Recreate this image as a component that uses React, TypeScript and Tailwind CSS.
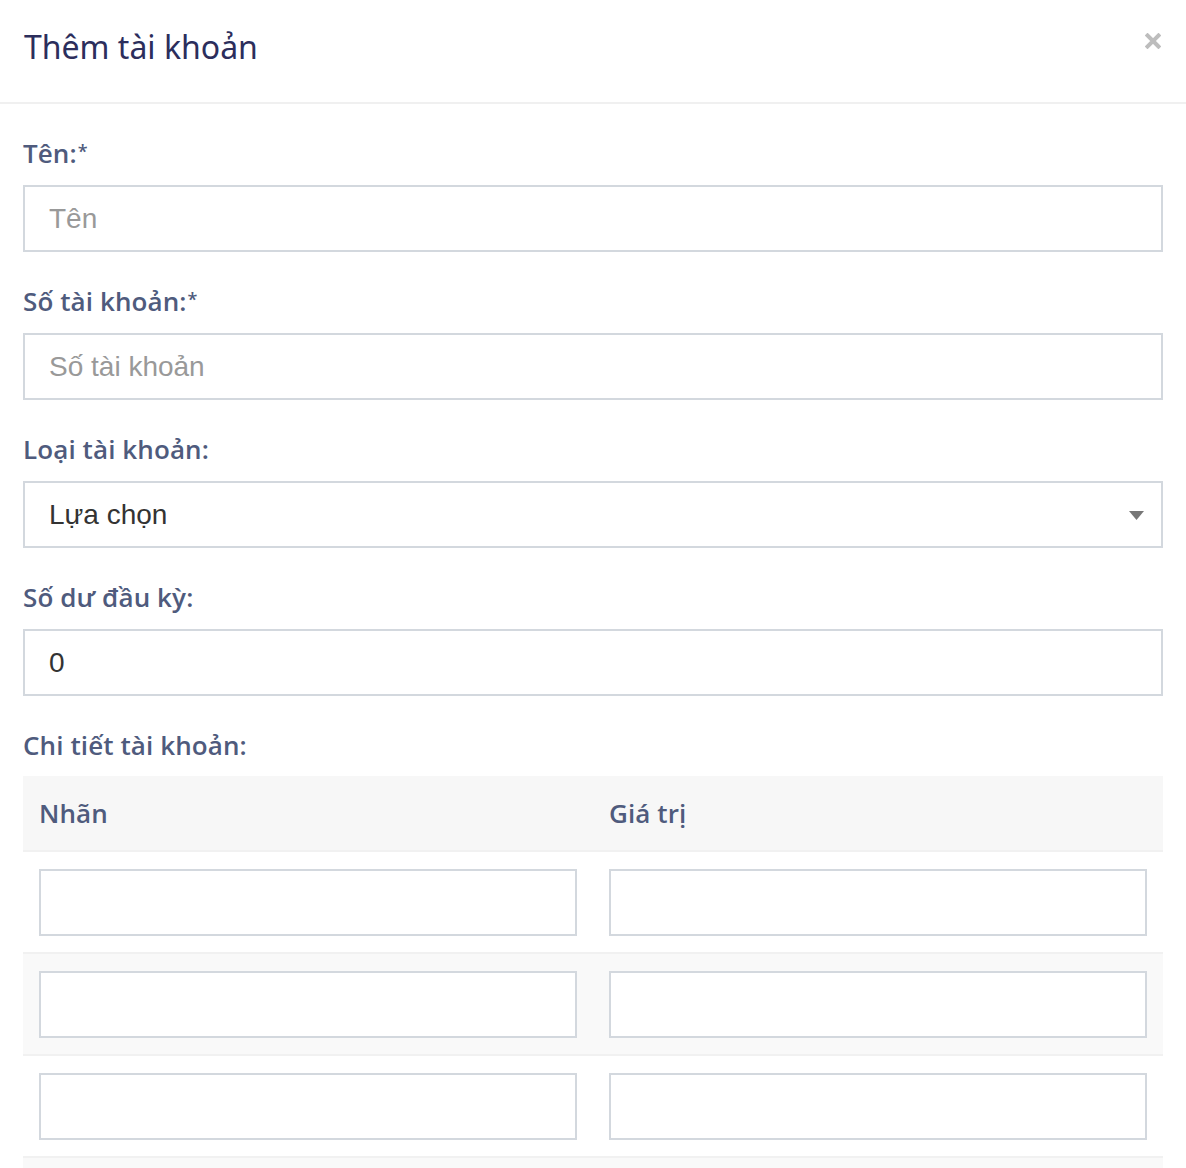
import React from "react";

const labelCls =
  "block text-[26px] leading-[30px] font-semibold text-[#4f5b7d] tracking-[0.1px] [font-family:'Open_Sans',Lato,sans-serif]";
const inputCls =
  "block w-full h-[67px] border-2 border-[#d3d8de] bg-white px-[24px] text-[28px] text-[#333] placeholder:text-[#999] outline-none [font-family:'Liberation_Sans',Arial,sans-serif]";

function Field({ label, children }: { label: React.ReactNode; children: React.ReactNode }) {
  return (
    <div className="flex flex-col gap-[17px]">
      <label className={labelCls}>{label}</label>
      {children}
    </div>
  );
}

const Star = () => <span className="text-[18px] align-top relative top-[-2px] ml-[1px]">*</span>;

export default function App() {
  const rows = [0, 1, 2];
  return (
    <div className="w-[1186px] h-[1168px] overflow-hidden bg-white">
      <div className="flex items-start justify-between h-[104px] border-b-2 border-[#f0f0f0] px-[24px] pt-[25px]">
        <h4 className="text-[32px] leading-[44px] text-[#2c2e5c] [font-family:'Noto_Sans',sans-serif]">
          Thêm tài khoản
        </h4>
        <button className="mt-[8px] mr-[1px]" aria-label="close">
          <svg width="16" height="16" viewBox="0 0 16 16">
            <path d="M2.5 2.5 L13.5 13.5 M13.5 2.5 L2.5 13.5" stroke="#bdbdbd" strokeWidth="4" strokeLinecap="square" />
          </svg>
        </button>
      </div>
      <div className="px-[23px] pt-[34px] flex flex-col gap-[34px]">
        <Field label={<>Tên:<Star /></>}>
          <input className={inputCls} placeholder="Tên" />
        </Field>
        <Field label={<>Số tài khoản:<Star /></>}>
          <input className={inputCls} placeholder="Số tài khoản" />
        </Field>
        <Field label="Loại tài khoản:">
          <div className="relative">
            <div className={inputCls + " flex items-center"}>Lựa chọn</div>
            <svg className="absolute right-[19px] top-[30px]" width="15" height="9" viewBox="0 0 15 9">
              <path d="M0 0 H15 L7.5 9 Z" fill="#777" />
            </svg>
          </div>
        </Field>
        <Field label="Số dư đầu kỳ:">
          <input className={inputCls} defaultValue="0" />
        </Field>
        <div className="flex flex-col gap-[16px]">
          <label className={labelCls}>Chi tiết tài khoản:</label>
          <div className="w-full">
            <div className="grid grid-cols-2 h-[76px] bg-[#f7f7f7] border-b-2 border-[#f1f1f1]">
              <div className={"px-[16px] flex items-center " + labelCls}>Nhãn</div>
              <div className={"px-[16px] flex items-center " + labelCls}>Giá trị</div>
            </div>
            {rows.map((r) => (
              <div
                key={r}
                className={
                  "grid grid-cols-2 border-b-2 border-[#f1f1f1] " + (r % 2 === 1 ? "bg-[#f9f9f9]" : "bg-white")
                }
              >
                <div className="px-[16px] pt-[17px] pb-[16px]">
                  <input className={inputCls} />
                </div>
                <div className="px-[16px] pt-[17px] pb-[16px]">
                  <input className={inputCls} />
                </div>
              </div>
            ))}
            <div className="h-[40px] bg-[#f9f9f9]" />
          </div>
        </div>
      </div>
    </div>
  );
}
